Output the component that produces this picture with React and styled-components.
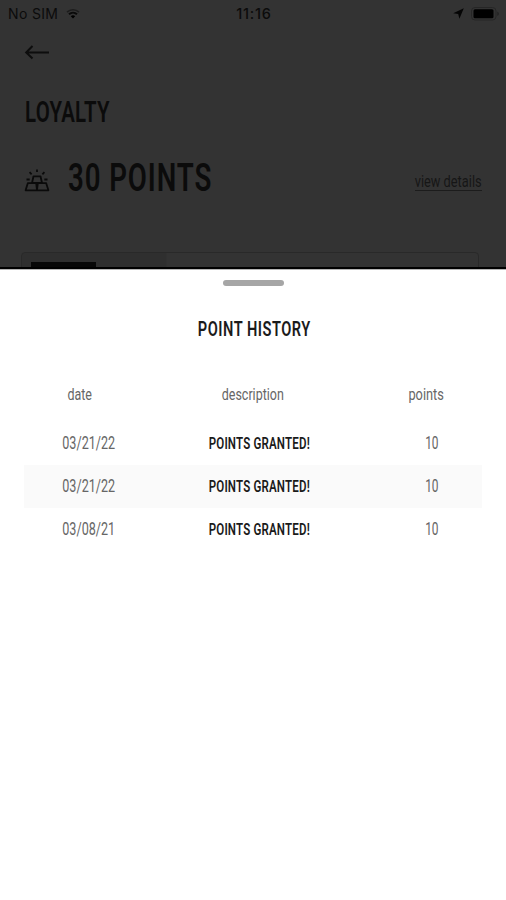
import React from 'react';
import styled, { createGlobalStyle } from 'styled-components';

const GlobalStyle = createGlobalStyle`
  * {
    box-sizing: border-box;
  }
  body {
    margin: 0;
    background: #fff;
    font-family: Roboto, "Liberation Sans", sans-serif;
  }
`;
const Screen = styled.div`
  width: 506px;
  height: 900px;
  overflow: hidden;
  background: #fff;
`;
const Backdrop = styled.div`
  height: 269px;
  overflow: hidden;
  background: #333;
  color: #0b0b0b;
  border-bottom: 2px solid #000;
`;
const StatusBar = styled.div`
  display: grid;
  grid-template-columns: 1fr auto 1fr;
  align-items: center;
  height: 27px;
  padding: 0 6px 0 8px;
  font: 14px/27px Inter, "Liberation Sans", sans-serif;
`;
const StatusGroup = styled.div`
  display: flex;
  align-items: center;
  gap: ${(p) => p.$gap}px;
  justify-content: ${(p) => (p.$end ? 'flex-end' : 'flex-start')};
`;
const Carrier = styled.span`
  letter-spacing: 0.35px;
`;
const Clock = styled.div`
  font-weight: 500;
  font-size: 14.5px;
  letter-spacing: 0.8px;
`;
const BackButton = styled.div`
  display: flex;
  align-items: center;
  height: 49px;
  padding-left: 24px;
`;
// squeezes the regular face into a condensed one
const Narrow = styled.span`
  display: inline-block;
  white-space: nowrap;
  font-size: ${(p) => p.$size}px;
  font-weight: ${(p) => p.$weight || 400};
  letter-spacing: ${(p) => p.$spacing || 0}px;
  transform: scaleX(${(p) => p.$scale});
  transform-origin: ${(p) => p.$origin || 'center'};
`;
const PageTitle = styled.div`
  height: 72px;
  padding-left: 25px;
  line-height: 71px;
`;
const Summary = styled.div`
  display: flex;
  align-items: center;
  height: 64px;
  padding: 0 24px 0 24px;
`;
const Balance = styled.div`
  flex: 1;
  padding: 3px 0 0 18px;
  line-height: 64px;
`;
const DetailsLink = styled.div`
  width: 67px;
  height: 18px;
  margin-top: 4px;
  direction: rtl;
  line-height: 17px;
  color: #161616;
  border-bottom: 1px solid #1c1c1c;
`;
const Card = styled.div`
  width: 458px;
  height: 40px;
  margin: 40px 0 0 21px;
  padding: 9px 9px;
  border: 1px solid #292929;
  border-radius: 4px;
  background: linear-gradient(90deg, #2f2f2f 144px, #333 145px);
`;
const CardImage = styled.div`
  width: 65px;
  height: 20px;
  background: #080808;
`;
const Sheet = styled.div`
  height: 631px;
  background: #fff;
  border-top: 1px solid #b5b5b5;
`;
const Handle = styled.div`
  width: 61px;
  height: 6px;
  margin: 10px auto 0;
  border-radius: 3px;
  background: #a6a6a6;
`;
const SheetTitle = styled.div`
  display: flex;
  justify-content: center;
  margin-top: 29px;
  padding-left: 2px;
  line-height: 29px;
  color: #1b1b1b;
`;
const Table = styled.div`
  margin: 34px 24px 0;
  color: #666;
`;
const HeaderRow = styled.div`
  display: grid;
  grid-template-columns: 112px 234px 112px;
  height: 44px;
  line-height: 34px;
`;
const Row = styled.div`
  display: grid;
  grid-template-columns: 130px 210px 118px;
  height: 43px;
  line-height: 43px;
  background: ${(p) => (p.$shaded ? '#fafafa' : '#fff')};
`;
const Cell = styled.div`
  display: flex;
  justify-content: center;
  padding-left: ${(p) => p.$inset || 0}px;
  color: ${(p) => p.$color || 'inherit'};
`;

const history = [
  { id: 1, date: '03/21/22', description: 'POINTS GRANTED!', points: 10 },
  { id: 2, date: '03/21/22', description: 'POINTS GRANTED!', points: 10 },
  { id: 3, date: '03/08/21', description: 'POINTS GRANTED!', points: 10 },
];

const WifiIcon = () => (
  <svg width="14" height="11" viewBox="0 0 14 11" fill="none" stroke="#0a0a0a">
    <path d="M1 4.1C4.4.9 9.6.9 13 4.1" stroke="#1d1d1d" strokeWidth="1.6" />
    <path d="M3 6.3c2.3-2.1 5.7-2.1 8 0" strokeWidth="2" />
    <path d="M4.8 8.2c1.3-1.2 3.1-1.2 4.4 0L7 10.5z" fill="#000" stroke="none" />
  </svg>
);

const LocationIcon = () => (
  <svg width="11" height="11" viewBox="0 0 11 11">
    <path d="M10.8.2 6.4 10.8 5.2 6 .2 5.2z" fill="#050505" />
  </svg>
);

const BatteryIcon = () => (
  <svg width="29" height="14" viewBox="0 0 29 14">
    <rect x=".5" y=".5" width="24.5" height="12.5" rx="3.5" fill="none" stroke="#262626" />
    <rect x="2.5" y="2.3" width="20" height="9" rx="1.5" fill="#000" />
    <path d="M26.3 4.5c2 .8 2 3.7 0 4.5z" fill="#222" />
  </svg>
);

const ArrowIcon = () => (
  <svg width="26" height="16" viewBox="0 0 26 16" fill="none" stroke="#0d0d0d" strokeWidth="2">
    <path d="M25 8.5H2.5M8.5 2 2.2 8.5l6.300 6" />
  </svg>
);

const GoldIcon = () => (
  <svg width="26" height="23" viewBox="0 0 26 23" fill="none" stroke="#0a0a0a" strokeWidth="1.8" strokeLinejoin="round">
    <path d="M8 14 9.500 7.300h7L18 14z" />
    <path d="M1.600 21.300 3.800 14.200h8.400l.8 7.100zM13 21.300l.8-7.100h8.400l2.200 7.100z" />
    <path d="M13 .6v2.500M5.600 3.200l2 2.100M20.400 3.200l-2 2.100M2.500 10.500h3.200M20.300 10.500h3.200" />
  </svg>
);

const App = () => {
  return (
    <Screen>
      <GlobalStyle />
      <Backdrop>
        <StatusBar>
          <StatusGroup $gap={8}>
            <Carrier>No SIM</Carrier>
            <WifiIcon />
          </StatusGroup>
          <Clock>11:16</Clock>
          <StatusGroup $gap={7} $end>
            <LocationIcon />
            <BatteryIcon />
          </StatusGroup>
        </StatusBar>
        <BackButton>
          <ArrowIcon />
        </BackButton>
        <PageTitle>
          <Narrow $size={30} $weight={600} $scale={0.68} $spacing={0.4} $origin="left">LOYALTY</Narrow>
        </PageTitle>
        <Summary>
          <GoldIcon />
          <Balance>
            <Narrow $size={39.5} $weight={600} $scale={0.7} $spacing={1.3} $origin="left">30 POINTS</Narrow>
          </Balance>
          <DetailsLink>
            <Narrow $size={16} $scale={0.8} $origin="right">view details</Narrow>
          </DetailsLink>
        </Summary>
        <Card>
          <CardImage />
        </Card>
      </Backdrop>
      <Sheet>
        <Handle />
        <SheetTitle>
          <Narrow $size={20} $weight={600} $scale={0.73} $spacing={0.7}>POINT HISTORY</Narrow>
        </SheetTitle>
        <Table>
          <HeaderRow>
            <Cell><Narrow $size={16} $scale={0.78}>date</Narrow></Cell>
            <Cell><Narrow $size={16} $scale={0.78}>description</Narrow></Cell>
            <Cell $inset={1}><Narrow $size={16} $scale={0.8}>points</Narrow></Cell>
          </HeaderRow>
          {history.map((item, i) => (
            <Row key={item.id} $shaded={i % 2 === 1}>
              <Cell><Narrow $size={17.5} $scale={0.72}>{item.date}</Narrow></Cell>
              <Cell $color="#1a1a1a">
                <Narrow $size={16} $weight={600} $scale={0.72} $spacing={0.25}>{item.description}</Narrow>
              </Cell>
              <Cell $inset={18}><Narrow $size={17.5} $scale={0.68}>{item.points}</Narrow></Cell>
            </Row>
          ))}
        </Table>
      </Sheet>
    </Screen>
  );
};

export default App;
